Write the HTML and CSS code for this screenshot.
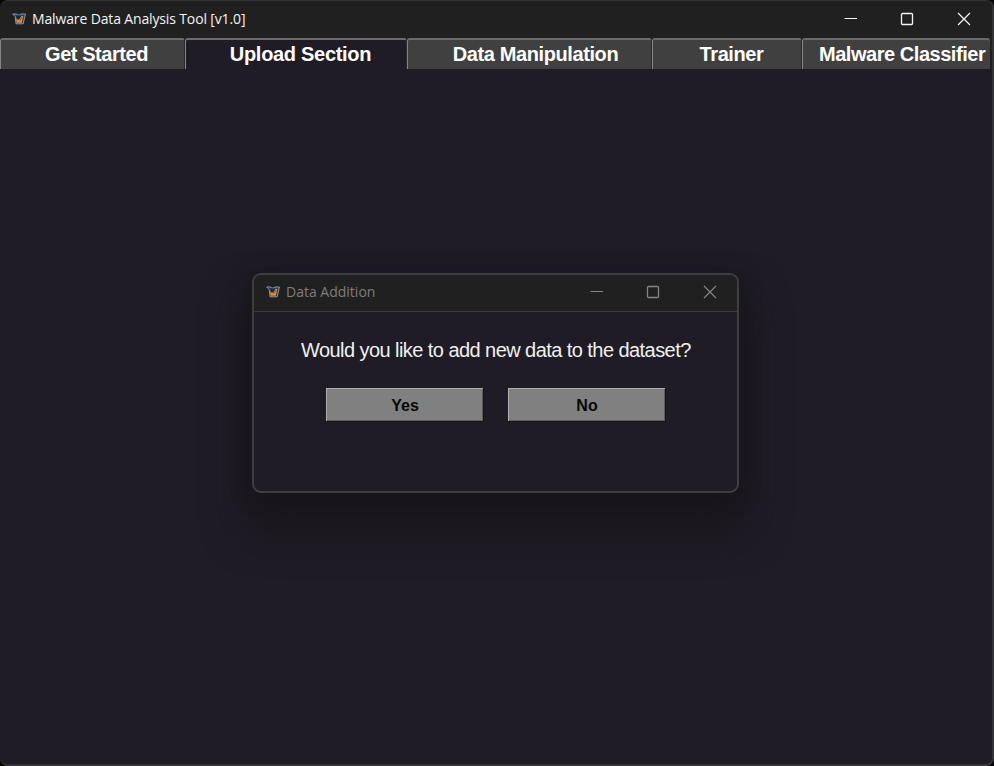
FILE: index.html
```
<!DOCTYPE html>
<html lang="en">
<head>
<meta charset="utf-8">
<title>Malware Data Analysis Tool [v1.0]</title>
<link rel="stylesheet" href="styles.css">
</head>
<body>
<svg class="defs" aria-hidden="true">
  <symbol id="logo" viewBox="0 0 14 12">
    <path d="M.7 1h4l.8 1h2.4l.8-1h4.7L11.2 10.8H4L3.2 3.5z" fill="#263b59" stroke="#9ba5b3" stroke-width=".9"/>
    <path d="M4.1 5.2l1.7 1.5 1.3.1 2.6-4 1.5.1-1.4 6.9H4.7z" fill="#ed8c24"/>
    <path d="M4.6 2.6h3.3v2.8l-1.5.7-1.5-1z" fill="#14284a"/>
    <path d="M7.8 7.8l2-3.6" stroke="#684530" stroke-width=".8"/>
  </symbol>
  <symbol id="min" viewBox="0 0 14 14"><path d="M1.5 6.5H14" stroke="currentColor" stroke-width="1"/></symbol>
  <symbol id="max" viewBox="0 0 14 14"><rect x="1.5" y="1.5" width="11" height="11" rx="1" fill="none" stroke="currentColor" stroke-width="1.3"/></symbol>
  <symbol id="close" viewBox="0 0 14 14"><path d="M1 1l12 12M13 1L1 13" stroke="currentColor" stroke-width="1.2"/></symbol>
</svg>
<main class="window">
  <header class="titlebar">
    <svg class="logo"><use href="#logo"/></svg>
    <h1>Malware Data Analysis Tool [v1.0]</h1>
    <div class="controls"><svg><use href="#min"/></svg><svg><use href="#max"/></svg><svg><use href="#close"/></svg></div>
  </header>
  <nav class="tabs">
    <div class="tab"><span>Get Started</span></div>
    <div class="tab active"><span>Upload Section</span></div>
    <div class="tab"><span>Data Manipulation</span></div>
    <div class="tab"><span>Trainer</span></div>
    <div class="tab"><span>Malware Classifier</span></div>
  </nav>
</main>
<section class="dialog">
  <header class="titlebar">
    <svg class="logo"><use href="#logo"/></svg>
    <h2>Data Addition</h2>
    <div class="controls"><svg><use href="#min"/></svg><svg><use href="#max"/></svg><svg><use href="#close"/></svg></div>
  </header>
  <p>Would you like to add new data to the dataset?</p>
  <div class="actions"><button>Yes</button><button>No</button></div>
</section>
</body>
</html>
```
FILE: styles.css
```
* { box-sizing: border-box; }
body { margin: 0; width: 994px; height: 766px; overflow: hidden; background: #050505; font-family: "Liberation Sans", sans-serif; }
.defs { position: absolute; width: 0; height: 0; }
.window { height: 766px; overflow: hidden; background: #1f1c26; border: solid #343437; border-width: 1px 2px 2px 0; border-radius: 8px; }
.titlebar { display: flex; align-items: center; background: #202020; }
.titlebar h1, .titlebar h2 { margin: 0; font: 400 14px/20px "Open Sans", sans-serif; white-space: nowrap; }
.logo { width: 14px; height: 12px; flex: none; }
.controls { display: flex; gap: 43px; margin-left: auto; }
.controls svg { width: 14px; height: 14px; }
.window > .titlebar { height: 37px; padding: 0 21px 2px 12px; }
.titlebar h1 { margin-left: 6px; color: #f4f4f4; letter-spacing: -.14px; }
.window .controls { color: #f4f4f4; }
.tabs { display: grid; grid-template-columns: 185px 222px 245px 150px 188px; height: 31px; background: #202020; }
.tab { display: flex; justify-content: center; overflow: hidden; border-top: 2px solid #6c6c6c; border-left: 1px solid #858587; border-right: 1px solid #2b2b2b; border-radius: 3px 3px 0 0; background: #404040; color: #fff; font-size: 20px; font-weight: 700; line-height: 29px; white-space: nowrap; }
.tab span { letter-spacing: -.4px; margin-left: 9px; }
.tab:first-child span { margin-left: 8px; letter-spacing: -.45px; }
.tab:nth-child(3) span { margin-left: 12px; }
.tab.active { background: #1f1c26; }
.tab.active span { letter-spacing: -.3px; }
.tab:last-child { justify-content: flex-start; border-right: 0; }
.tab:last-child span { margin-left: 16px; letter-spacing: -.46px; }
.dialog { position: absolute; left: 252px; top: 273px; width: 487px; height: 220px; overflow: hidden; background: #1f1c26; border: 2px solid #3e3e42; border-radius: 9px; box-shadow: 0 30px 40px 8px rgba(20,19,20,.6), 0 2px 20px rgba(20,18,22,.5); }
.dialog .titlebar { height: 37px; padding: 0 20px 2px 12px; border-bottom: 1px solid #3b3b3f; }
.dialog h2 { margin-left: 6px; color: #7d7d7d; letter-spacing: 0; }
.dialog .controls { color: #858585; }
.dialog p { margin: 26px 0 0 47px; color: #f0f0f0; font-size: 20px; line-height: 24px; letter-spacing: -.56px; white-space: nowrap; }
.actions { display: flex; gap: 24px; margin: 26px 0 0 72px; }
button { width: 158px; height: 34px; padding: 1px 0 0; border: 0; background: #808080; color: #080808; font: 700 16px/20px "Liberation Sans", sans-serif; box-shadow: inset -1px -1px #151418, inset 1px 1px #b0b0b0, inset -2px -2px #5d5d5d; }
```
